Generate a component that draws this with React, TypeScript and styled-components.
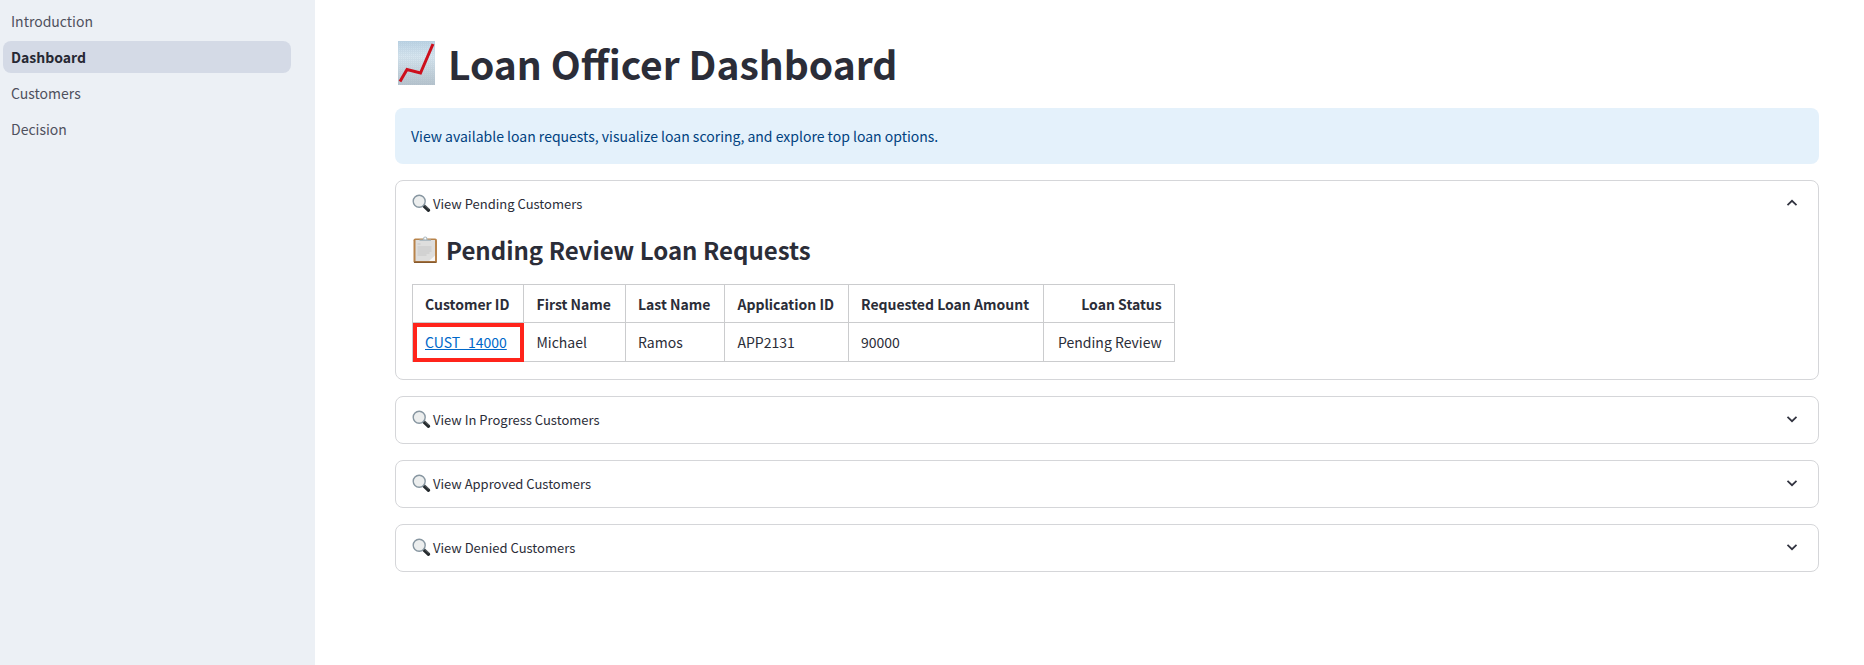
import React, { useState } from "react";
import styled, { createGlobalStyle } from "styled-components";

const GlobalStyle = createGlobalStyle`
  *, *::before, *::after { box-sizing: border-box; }
  body {
    margin: 0;
    background: #ffffff;
    color: #2b2d38;
    font-family: "Source Sans Pro", "Noto Sans CJK SC", "Noto Sans", sans-serif;
    font-size: 14px;
    line-height: 24px;
  }
`;

const Page = styled.div`
  display: flex;
  min-height: 100vh;
`;

const Sidebar = styled.nav`
  flex: 0 0 315px;
  display: flex;
  flex-direction: column;
  gap: 4px;
  padding: 5px 24px 5px 3px;
  background: #ecf0f5;
`;

const NavLink = styled.a<{ $active?: boolean }>`
  padding: 4px 8px;
  border-radius: 8px;
  background: ${(p) => (p.$active ? "#d4dae6" : "transparent")};
  color: ${(p) => (p.$active ? "#262833" : "#4f515d")};
  font-weight: ${(p) => (p.$active ? 700 : 400)};
  text-decoration: none;
`;

const Main = styled.main`
  flex: 1;
  min-width: 0;
  display: flex;
  flex-direction: column;
  gap: 16px;
  padding: 35px 45px 36px 80px;
`;

const Title = styled.h1`
  display: flex;
  align-items: center;
  gap: 12px;
  margin: 0;
  padding: 0 0 1px 2px;
  font-size: 39px;
  line-height: 56px;
  font-weight: 700;
`;

const Info = styled.p`
  margin: 0;
  padding: 16px;
  border-radius: 8px;
  background: #e4f1fb;
  color: #004280;
`;

const Panel = styled.section`
  border: 1px solid #d5d6d9;
  border-radius: 8px;
`;

const PanelToggle = styled.button`
  display: flex;
  align-items: center;
  gap: 2px;
  width: 100%;
  height: 46px;
  padding: 0 20px 2px 16px;
  border: 0;
  background: none;
  color: inherit;
  font: inherit;
  font-size: 13px;
  cursor: pointer;
`;

const ToggleLabel = styled.span`
  flex: 1;
  padding-top: 2px;
  text-align: left;
`;

const PanelBody = styled.div`
  padding: 3px 16px 17px;
`;

const SectionTitle = styled.h2`
  display: flex;
  align-items: center;
  gap: 8px;
  margin: 0 0 14px;
  font-size: 24px;
  line-height: 40px;
  font-weight: 700;
`;

const Table = styled.table`
  border-collapse: collapse;
`;

const Cell = styled.td<{ $end?: boolean }>`
  height: 39px;
  padding: ${(p) => (p.$end ? "0 12px 0 14px" : "0 14px 0 12px")};
  border: 1px solid #cbccce;
  text-align: ${(p) => (p.$end ? "right" : "left")};
  white-space: nowrap;
`;

const HeadCell = styled(Cell)`
  height: 38px;
`;

const MarkedCell = styled(Cell)`
  outline: 4px solid #ff241b;
  outline-offset: -4px;
`;

const CustomerLink = styled.a`
  color: #0068c9;
`;

const ChartIcon = () => (
  <svg width="39" height="44" viewBox="1 0 39 44" aria-hidden="true">
    <defs>
      <linearGradient id="chart-paper" x1="0" y1="0" x2="0" y2="1">
        <stop offset="0" stopColor="#bdd5e6" />
        <stop offset="0.35" stopColor="#d9e8f1" />
        <stop offset="1" stopColor="#b7c4cd" />
      </linearGradient>
      <pattern id="chart-grid" width="2" height="2" patternUnits="userSpaceOnUse">
        <path d="M0 .5H2M.5 0V2" stroke="#8fa9ba" strokeWidth="1" opacity=".14" />
      </pattern>
    </defs>
    <rect x="2" width="37" height="44" fill="url(#chart-paper)" />
    <rect x="2" width="37" height="44" fill="url(#chart-grid)" />
    <path d="M4 40.500 11 28.500 24.500 32 37 3" fill="none" stroke="#cd0f1c" strokeWidth="3" />
  </svg>
);

const ClipboardIcon = () => (
  <svg width="26" height="28" viewBox="0 0 26 28" aria-hidden="true">
    <rect x="1.500" y="2.500" width="23.500" height="24.500" rx="1.800" fill="#b8834a" />
    <path d="M2 26.300h22.500" stroke="#86592d" strokeWidth="1.400" />
    <rect x="3.500" y="4" width="19.500" height="21" fill="#dededd" />
    <path d="M23 19.500V25h-6z" fill="#f7f7f7" />
    <path d="M5.500 8h3M5.500 11h14M5.500 13h14M5.500 15h14M5.500 17h12M5.500 19h9" stroke="#c6c6c6" strokeWidth="1" />
    <path d="M7.500 5V3.500H11C11 1.500 11.700.5 13.200.5S15.500 1.500 15.500 3.500H19V5z" fill="#aebbc2" />
    <circle cx="13.200" cy="2.400" r="1" fill="#fff" />
  </svg>
);

const SearchIcon = () => (
  <svg width="19" height="19" viewBox="0 0 19 19" aria-hidden="true">
    <path d="m11.500 11.500 5 4.700" stroke="#24292c" strokeWidth="3.400" strokeLinecap="round" />
    <path d="m12.300 10.900 4.500 4.200" stroke="#777f83" strokeWidth=".8" />
    <circle cx="7.200" cy="7.200" r="6" fill="#eceeee" stroke="#8796a1" strokeWidth="1.400" />
  </svg>
);

const Chevron = ({ up }: { up: boolean }) => (
  <svg width="12" height="8" viewBox="0 0 12 8" fill="none" stroke="#31333f" strokeWidth="1.700" aria-hidden="true">
    <path d={up ? "M1.500 6.200 6 1.800 10.500 6.200" : "M1.500 1.800 6 6.200 10.500 1.800"} />
  </svg>
);

interface ExpanderProps {
  label: string;
  initiallyOpen?: boolean;
  children?: React.ReactNode;
}

function Expander({ label, initiallyOpen = false, children }: ExpanderProps) {
  const [open, setOpen] = useState(initiallyOpen);
  return (
    <Panel>
      <PanelToggle type="button" aria-expanded={open} onClick={() => setOpen(!open)}>
        <SearchIcon />
        <ToggleLabel>{label}</ToggleLabel>
        <Chevron up={open} />
      </PanelToggle>
      {open && children ? <PanelBody>{children}</PanelBody> : null}
    </Panel>
  );
}

const pages = ["Introduction", "Dashboard", "Customers", "Decision"];
const columns = ["Customer ID", "First Name", "Last Name", "Application ID", "Requested Loan Amount", "Loan Status"];
const rows = [["CUST_14000", "Michael", "Ramos", "APP2131", "90000", "Pending Review"]];

export default function App() {
  return (
    <Page>
      <GlobalStyle />
      <Sidebar>
        {pages.map((name) => (
          <NavLink
            key={name}
            href={`#${name.toLowerCase()}`}
            $active={name === "Dashboard"}
            aria-current={name === "Dashboard" ? "page" : undefined}
          >
            {name}
          </NavLink>
        ))}
      </Sidebar>
      <Main>
        <Title>
          <ChartIcon />
          Loan Officer Dashboard
        </Title>
        <Info>View available loan requests, visualize loan scoring, and explore top loan options.</Info>
        <Expander label="View Pending Customers" initiallyOpen>
          <SectionTitle>
            <ClipboardIcon />
            Pending Review Loan Requests
          </SectionTitle>
          <Table>
            <thead>
              <tr>
                {columns.map((name, i) => (
                  <HeadCell as="th" scope="col" key={name} $end={i === columns.length - 1}>
                    {name}
                  </HeadCell>
                ))}
              </tr>
            </thead>
            <tbody>
              {rows.map(([id, ...values]) => (
                <tr key={id}>
                  <MarkedCell>
                    <CustomerLink href={`#${id}`}>{id}</CustomerLink>
                  </MarkedCell>
                  {values.map((value, i) => (
                    <Cell key={value} $end={i === values.length - 1}>
                      {value}
                    </Cell>
                  ))}
                </tr>
              ))}
            </tbody>
          </Table>
        </Expander>
        <Expander label="View In Progress Customers" />
        <Expander label="View Approved Customers" />
        <Expander label="View Denied Customers" />
      </Main>
    </Page>
  );
}
